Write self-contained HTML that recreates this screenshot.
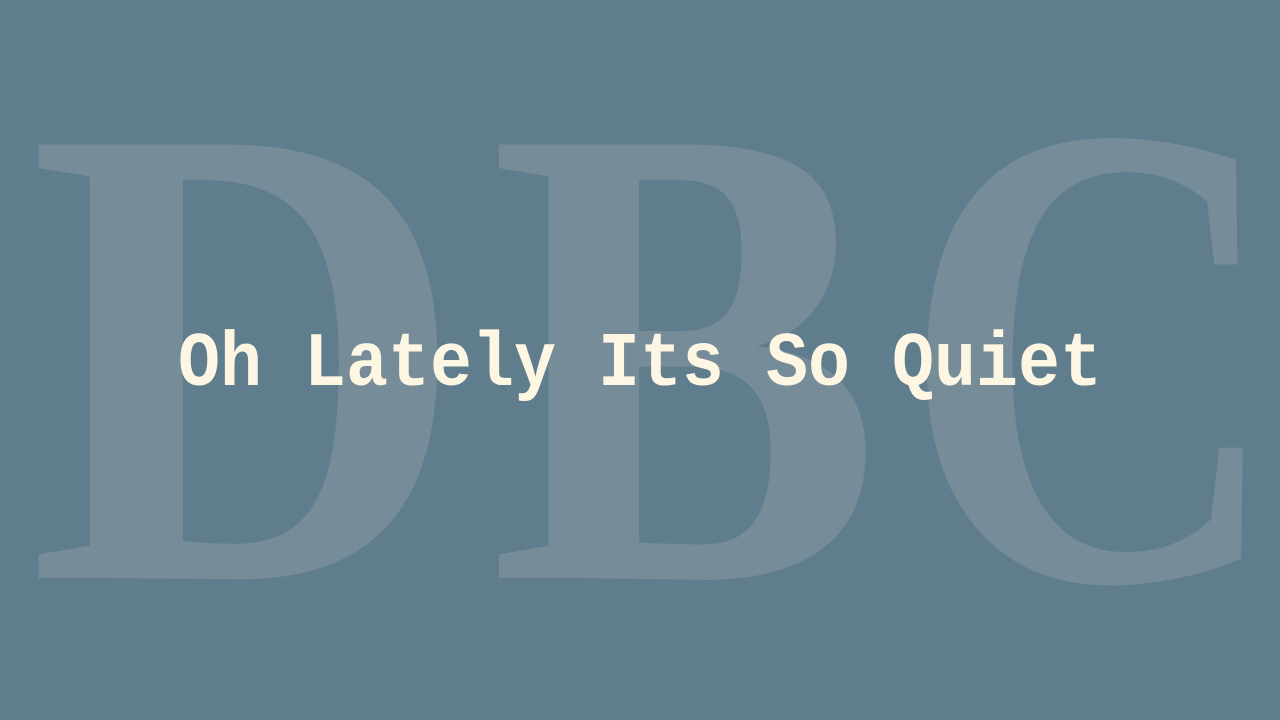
<!DOCTYPE html>
<html><head><meta charset="utf-8"><style>
html,body{margin:0;padding:0;width:1280px;height:720px;overflow:hidden;background:#5f7d8c;}
svg{display:block}
</style></head><body>
<svg width="1280" height="720" viewBox="0 0 1280 720" xmlns="http://www.w3.org/2000/svg">
<rect width="1280" height="720" fill="#5f7d8c"/>
<g fill="#768c99" font-family="Liberation Serif, serif" font-weight="bold" font-size="662">
<text x="28" y="578" textLength="439" lengthAdjust="spacingAndGlyphs">D</text>
<text x="489" y="578" textLength="393" lengthAdjust="spacingAndGlyphs">B</text>
<text x="901" y="579" font-size="666" textLength="382" lengthAdjust="spacingAndGlyphs">C</text>
</g>
<text x="178" y="385" font-family="Liberation Mono, monospace" font-weight="bold" font-size="77" fill="#fdf6e3" textLength="924" lengthAdjust="spacingAndGlyphs">Oh Lately Its So Quiet</text>
</svg>
</body></html>
